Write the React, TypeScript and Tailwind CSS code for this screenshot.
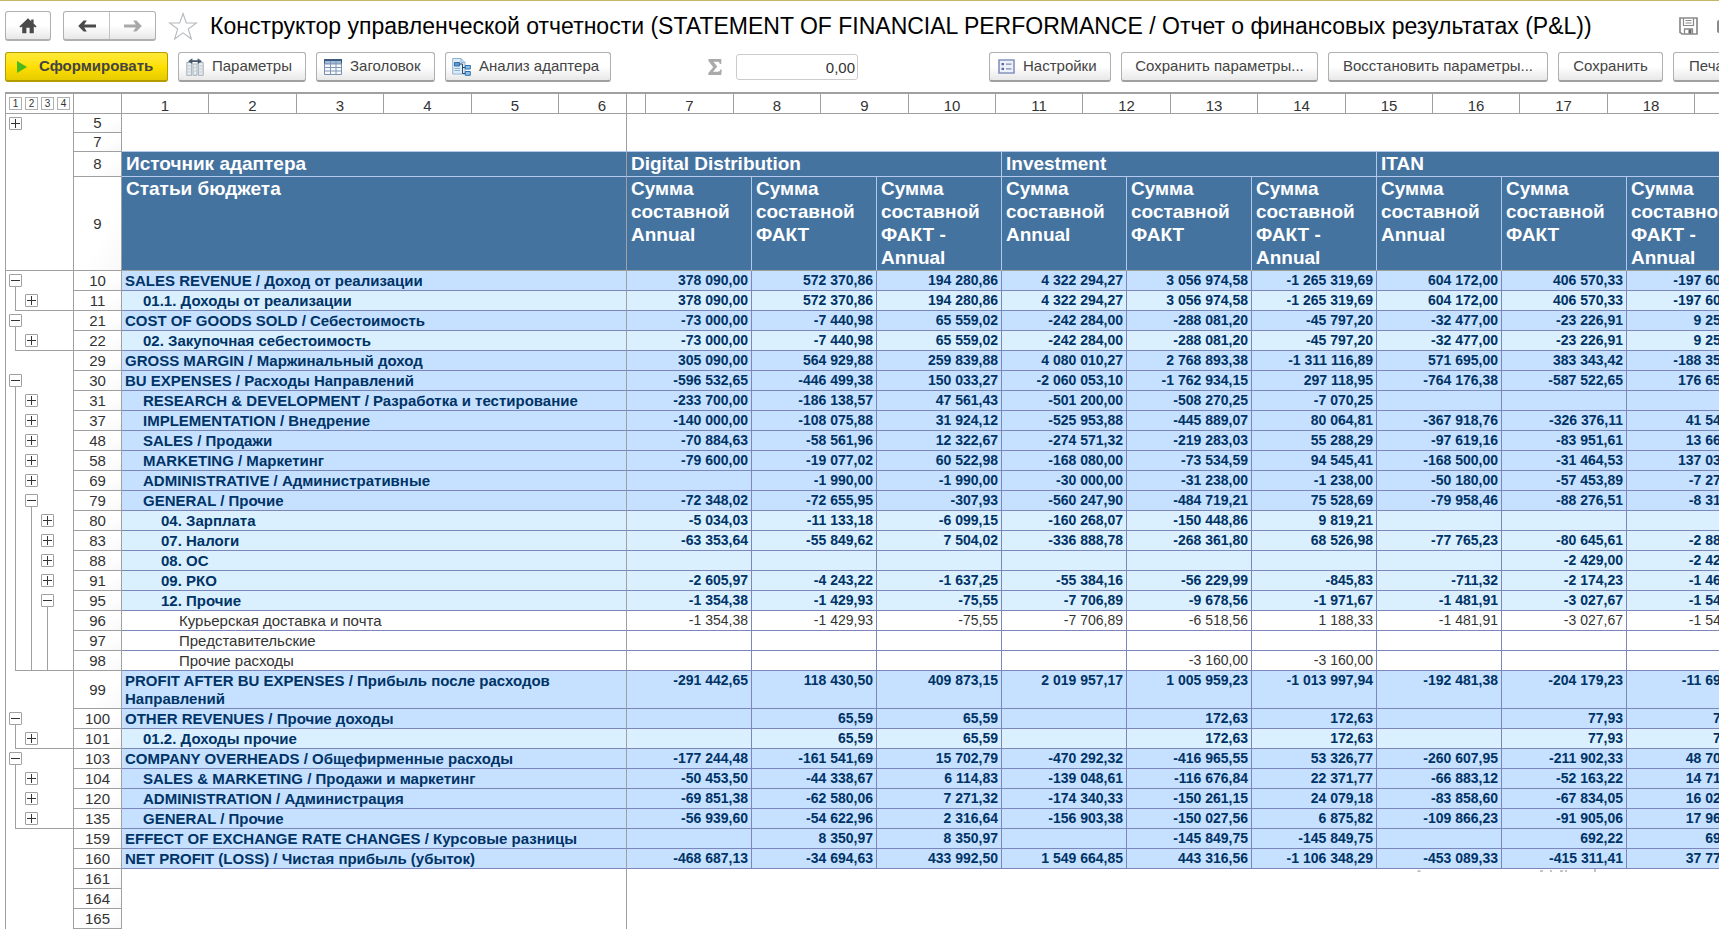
import type { ReactNode } from "react";
import clsx from "clsx";

type Slot = "" | "+" | "-" | "|";
type Tone = "dark" | "light" | "plain";

interface Row {
  num: number;
  label: string;
  level: number;
  tone: Tone;
  tree: Slot[];
  // the group ends here: draw the closing line to the row header
  close?: boolean;
  values: string[];
}

const row = (
  num: number,
  label: string,
  level: number,
  tone: Tone,
  tree: Slot[],
  values: string,
  close = false
): Row => ({ num, label, level, tone, tree, close, values: values.split("|") });

const rows: Row[] = [
  row(10, "SALES REVENUE / Доход от реализации", 0, "dark", ["-"], "378 090,00|572 370,86|194 280,86|4 322 294,27|3 056 974,58|-1 265 319,69|604 172,00|406 570,33|-197 601,67"),
  row(11, "01.1. Доходы от реализации", 1, "light", ["|", "+"], "378 090,00|572 370,86|194 280,86|4 322 294,27|3 056 974,58|-1 265 319,69|604 172,00|406 570,33|-197 601,67", true),
  row(21, "COST OF GOODS SOLD / Себестоимость", 0, "dark", ["-"], "-73 000,00|-7 440,98|65 559,02|-242 284,00|-288 081,20|-45 797,20|-32 477,00|-23 226,91|9 250,09"),
  row(22, "02. Закупочная себестоимость", 1, "light", ["|", "+"], "-73 000,00|-7 440,98|65 559,02|-242 284,00|-288 081,20|-45 797,20|-32 477,00|-23 226,91|9 250,09", true),
  row(29, "GROSS MARGIN / Маржинальный доход", 0, "dark", [], "305 090,00|564 929,88|259 839,88|4 080 010,27|2 768 893,38|-1 311 116,89|571 695,00|383 343,42|-188 351,58"),
  row(30, "BU EXPENSES / Расходы Направлений", 0, "dark", ["-"], "-596 532,65|-446 499,38|150 033,27|-2 060 053,10|-1 762 934,15|297 118,95|-764 176,38|-587 522,65|176 653,73"),
  row(31, "RESEARCH & DEVELOPMENT / Разработка и тестирование", 1, "dark", ["|", "+"], "-233 700,00|-186 138,57|47 561,43|-501 200,00|-508 270,25|-7 070,25|||"),
  row(37, "IMPLEMENTATION / Внедрение", 1, "dark", ["|", "+"], "-140 000,00|-108 075,88|31 924,12|-525 953,88|-445 889,07|80 064,81|-367 918,76|-326 376,11|41 542,65"),
  row(48, "SALES / Продажи", 1, "dark", ["|", "+"], "-70 884,63|-58 561,96|12 322,67|-274 571,32|-219 283,03|55 288,29|-97 619,16|-83 951,61|13 667,55"),
  row(58, "MARKETING / Маркетинг", 1, "dark", ["|", "+"], "-79 600,00|-19 077,02|60 522,98|-168 080,00|-73 534,59|94 545,41|-168 500,00|-31 464,53|137 035,47"),
  row(69, "ADMINISTRATIVE / Административные", 1, "dark", ["|", "+"], "|-1 990,00|-1 990,00|-30 000,00|-31 238,00|-1 238,00|-50 180,00|-57 453,89|-7 273,89"),
  row(79, "GENERAL / Прочие", 1, "dark", ["|", "-"], "-72 348,02|-72 655,95|-307,93|-560 247,90|-484 719,21|75 528,69|-79 958,46|-88 276,51|-8 318,05"),
  row(80, "04. Зарплата", 2, "light", ["|", "|", "+"], "-5 034,03|-11 133,18|-6 099,15|-160 268,07|-150 448,86|9 819,21|||"),
  row(83, "07. Налоги", 2, "light", ["|", "|", "+"], "-63 353,64|-55 849,62|7 504,02|-336 888,78|-268 361,80|68 526,98|-77 765,23|-80 645,61|-2 880,38"),
  row(88, "08. ОС", 2, "light", ["|", "|", "+"], "|||||||-2 429,00|-2 429,00"),
  row(91, "09. РКО", 2, "light", ["|", "|", "+"], "-2 605,97|-4 243,22|-1 637,25|-55 384,16|-56 229,99|-845,83|-711,32|-2 174,23|-1 462,91"),
  row(95, "12. Прочие", 2, "light", ["|", "|", "-"], "-1 354,38|-1 429,93|-75,55|-7 706,89|-9 678,56|-1 971,67|-1 481,91|-3 027,67|-1 545,76"),
  row(96, "Курьерская доставка и почта", 3, "plain", ["|", "|", "|"], "-1 354,38|-1 429,93|-75,55|-7 706,89|-6 518,56|1 188,33|-1 481,91|-3 027,67|-1 545,76"),
  row(97, "Представительские", 3, "plain", ["|", "|", "|"], "||||||||"),
  row(98, "Прочие расходы", 3, "plain", ["|", "|", "|"], "||||-3 160,00|-3 160,00|||", true),
  row(99, "PROFIT AFTER BU EXPENSES / Прибыль после расходов Направлений", 0, "dark", [], "-291 442,65|118 430,50|409 873,15|2 019 957,17|1 005 959,23|-1 013 997,94|-192 481,38|-204 179,23|-11 697,85"),
  row(100, "OTHER REVENUES / Прочие доходы", 0, "dark", ["-"], "|65,59|65,59||172,63|172,63||77,93|77,93"),
  row(101, "01.2. Доходы прочие", 1, "light", ["|", "+"], "|65,59|65,59||172,63|172,63||77,93|77,93", true),
  row(103, "COMPANY OVERHEADS / Общефирменные расходы", 0, "dark", ["-"], "-177 244,48|-161 541,69|15 702,79|-470 292,32|-416 965,55|53 326,77|-260 607,95|-211 902,33|48 705,62"),
  row(104, "SALES & MARKETING / Продажи и маркетинг", 1, "dark", ["|", "+"], "-50 453,50|-44 338,67|6 114,83|-139 048,61|-116 676,84|22 371,77|-66 883,12|-52 163,22|14 719,90"),
  row(120, "ADMINISTRATION / Администрация", 1, "dark", ["|", "+"], "-69 851,38|-62 580,06|7 271,32|-174 340,33|-150 261,15|24 079,18|-83 858,60|-67 834,05|16 024,55"),
  row(135, "GENERAL / Прочие", 1, "dark", ["|", "+"], "-56 939,60|-54 622,96|2 316,64|-156 903,38|-150 027,56|6 875,82|-109 866,23|-91 905,06|17 961,17", true),
  row(159, "EFFECT OF EXCHANGE RATE CHANGES / Курсовые разницы", 0, "dark", [], "|8 350,97|8 350,97||-145 849,75|-145 849,75||692,22|692,22"),
  row(160, "NET PROFIT (LOSS) / Чистая прибыль (убыток)", 0, "dark", [], "-468 687,13|-34 694,63|433 992,50|1 549 664,85|443 316,56|-1 106 348,29|-453 089,33|-415 311,41|37 777,92"),
];

const groups = ["Digital Distribution", "Investment", "ITAN"];
const measures = ["Сумма составной Annual", "Сумма составной ФАКТ", "Сумма составной ФАКТ - Annual"];
const rulerColumns = Array.from({ length: 19 }, (_, i) => i + 1);

const toneClass: Record<Tone, string> = {
  dark: "bg-[#c6e1ff] font-bold text-[#003366]",
  light: "bg-[#daf0ff] font-bold text-[#003366]",
  plain: "bg-white text-[#333333]",
};

const indentClass = ["pl-[3px]", "pl-[21px]", "pl-[39px]", "pl-[57px]"];

const ToolButton = ({ icon, className, children }: { icon?: ReactNode; className?: string; children: ReactNode }) => (
  <button
    type="button"
    className={clsx(
      "flex h-[30px] shrink-0 items-center gap-2 whitespace-nowrap rounded-[3px] border border-[#b0b0b0] border-b-2 border-b-[#a0a0a0] bg-linear-to-b from-white from-50% to-[#e8e8e8] text-[15px] text-[#444444]",
      className
    )}
  >
    {icon}
    {children}
  </button>
);

const HomeIcon = () => (
  <svg width="18" height="16" viewBox="0 0 18 16" fill="#4a4a4a" aria-hidden="true">
    <path d="M9 0.3 0.4 8.4 1.6 9.6 3.2 8.4V15.3H7.4V9.8H10.6V15.3H14.8V8.4L16.4 9.6 17.6 8.4 14.6 5.5V1.6H12.2V3.3Z" />
  </svg>
);

const ArrowIcon = ({ flip }: { flip?: boolean }) => (
  <svg width="18" height="12" viewBox="0 0 18 12" className={flip ? "rotate-180" : ""} aria-hidden="true">
    <path
      d="M5.6 0.5H8.8L6.2 4.5H18V7.5H6.2L8.8 11.5H5.6L0.2 6Z"
      fill={flip ? "#a8a8a8" : "#4a4a4a"}
    />
  </svg>
);

const StarIcon = () => (
  <svg width="30" height="29" viewBox="0 0 30 29" fill="white" stroke="#b4bac0" strokeWidth="1.1" aria-hidden="true">
    <path d="M15 1.5 18.3 11H28.5L20.3 17 23.4 27 15 20.9 6.6 27 9.7 17 1.5 11H11.7Z" />
  </svg>
);

const FloppyIcon = () => (
  <svg width="19" height="18" viewBox="0 0 19 18" fill="none" stroke="#8a8a8a" aria-hidden="true">
    <path d="M1 1H18V17H3L1 15.3Z" strokeWidth="1.7" />
    <path d="M4.5 1V8.5H14.5V1M6.5 3.5H12.5M6.5 6H12.5" strokeWidth="1.2" />
    <path d="M5.5 17V12H13.5V17" strokeWidth="1.3" />
    <path d="M9.5 12.5H12.5V16.5H9.5Z" fill="#666" stroke="none" />
  </svg>
);

const ParamsIcon = () => (
  <svg width="18" height="18" viewBox="0 0 18 18" fill="none" aria-hidden="true">
    <path d="M0.8 4.5H5.6V17.3H0.8ZM7 6H11V17.3H7ZM12.4 4.5H17.2V17.3H12.4Z" fill="#e8edf1" stroke="#a3b0ba" />
    <path d="M1 8H5.5M1 11H5.5M1 14H5.5M12.5 8H17M12.5 11H17M12.5 14H17M7 9.5H11M7 13H11" stroke="#c3ccd3" />
    <path d="M2 3.2 6.4 0.3V2.3H11.6V0.3L16 3.2 11.6 6.1V4.1H6.4V6.1Z" fill="#46586a" />
  </svg>
);

const TableIcon = () => (
  <svg width="18" height="16" viewBox="0 0 18 16" aria-hidden="true">
    <path d="M0.5 0.5H17.5V15.5H0.5Z" fill="#f6fafd" stroke="#7a8fae" />
    <path d="M0 0H18V4.5H0Z" fill="#3d5a80" />
    <path d="M1 2H17V4.5H1Z" fill="#9dbbd8" />
    <path d="M1 5H17M1 8.5H17M1 12H17M6.5 2V15M12 2V15" stroke="#7f95b3" />
  </svg>
);

const AnalysisIcon = () => (
  <svg width="19" height="18" viewBox="0 0 19 18" fill="none" aria-hidden="true">
    <path d="M0.7 0.5H9L13 4.5V16H0.7Z" fill="#dcebf8" stroke="#8fb2d4" />
    <path d="M9 0.5V4.5H13" stroke="#8fb2d4" />
    <path d="M2.5 4.5H7.5V8H2.5Z" fill="#5b9bd0" stroke="#2f6ea8" />
    <path d="M2.5 10.5H8M2.5 12.5H8" stroke="#8fb2d4" />
    <path d="M7.5 6H10.5V15.5H13M10.5 9.5H13" stroke="#2c4a68" />
    <path d="M13.3 7.5H18.3V11H13.3ZM13.3 13.5H18.3V17.3H13.3Z" fill="#8fc0e6" stroke="#2f6ea8" />
  </svg>
);

const SettingsIcon = () => (
  <svg width="17" height="15" viewBox="0 0 17 15" fill="none" aria-hidden="true">
    <path d="M1 1H16V14H1Z" fill="#eef1fa" stroke="#8592bd" strokeWidth="1.6" />
    <path d="M3.5 4H6V6.3H3.5ZM3.5 8.7H6V11H3.5Z" fill="#5b6ba3" />
    <path d="M8 5.2H13.5M8 9.9H13.5" stroke="#7f8cb5" strokeWidth="1.2" />
  </svg>
);

const SigmaIcon = () => (
  <svg width="14" height="16" viewBox="0 0 14 16" fill="#aaaaaa" role="img" aria-label="Сумма">
    <path d="M0.5 0H13.3V5H11.8C11.6 3.3 11 2.7 9.2 2.7H5.4L9.3 7.6 5 12.8H9.6C11.4 12.8 12 12.1 12.3 10.6H13.8L13.2 16H0.3V14L5.2 8.2 0.5 2Z" />
  </svg>
);

const Toggle = ({ open }: { open: boolean }) => (
  <button
    type="button"
    aria-label={open ? "Свернуть группу" : "Развернуть группу"}
    className="block size-[13px] shrink-0 rounded-[1px] border border-[#a0a0a0] bg-white"
  >
    <svg width="11" height="11" viewBox="0 0 11 11" stroke="#333333" aria-hidden="true">
      <path d={open ? "M1 5.5H10" : "M1 5.5H10M5.5 1V10"} />
    </svg>
  </button>
);

const TreeCell = ({ tree, close, className }: { tree: Slot[]; close?: boolean; className?: string }) => (
  <td className={clsx("h-px border-l border-r border-[#a0a0a0] p-0", className)}>
    <div className="flex h-full pl-[2px]">
      {tree.map((slot, i) => (
        <div key={i} className={clsx("flex h-full w-4 shrink-0 flex-col", close && i > 0 && "border-b border-[#a0a0a0]")}>
          {slot === "|" && (
            <div className={clsx("ml-[7px] flex-1 border-l border-[#a0a0a0]", close && i === 0 && "border-b")} />
          )}
          {(slot === "+" || slot === "-") && (
            <div className="flex flex-1 flex-col pl-px pt-[3px]">
              <Toggle open={slot === "-"} />
              {slot === "-" && <div className="ml-[6px] flex-1 border-l border-[#a0a0a0]" />}
            </div>
          )}
        </div>
      ))}
      {close && <div className="flex-1 border-b border-[#a0a0a0]" />}
    </div>
  </td>
);

const RowNumber = ({ children }: { children: ReactNode }) => (
  <th
    scope="row"
    className="border-b border-r border-[#a0a0a0] bg-linear-to-br from-white from-60% to-[#f8f8f8] p-0 text-center align-middle text-[15px] font-normal leading-[18px] text-[#333333]"
  >
    {children}
  </th>
);

const Header = () => (
  <header className="flex items-center border-t border-[#c9b565] pl-[5px] pt-[10px]">
    <button
      type="button"
      aria-label="Начальная страница"
      className="flex h-[30px] w-[46px] shrink-0 items-center justify-center rounded-[3px] border border-b-2 border-[#b0b0b0] bg-linear-to-b from-white from-50% to-[#e8e8e8]"
    >
      <HomeIcon />
    </button>
    <div className="ml-3 flex h-[30px] w-[93px] shrink-0 rounded-[3px] border border-b-2 border-[#b0b0b0] bg-linear-to-b from-white from-50% to-[#e8e8e8]">
      <button type="button" aria-label="Назад" className="flex flex-1 items-center justify-center border-r border-[#c4c4c4]">
        <ArrowIcon />
      </button>
      <button type="button" aria-label="Вперед" className="flex flex-1 items-center justify-center">
        <ArrowIcon flip />
      </button>
    </div>
    <button type="button" aria-label="В избранное" className="ml-3 shrink-0">
      <StarIcon />
    </button>
    <h1 className="ml-3 whitespace-nowrap text-[23px] leading-[30px] text-black">
      Конструктор управленческой отчетности (STATEMENT OF FINANCIAL PERFORMANCE / Отчет о финансовых результатах (P&amp;L))
    </h1>
    <div className="ml-auto flex shrink-0 items-center gap-[19px]">
      <button type="button" aria-label="Сохранить файл">
        <FloppyIcon />
      </button>
      <div className="h-[13px] w-[2px] rounded-l-sm border-y border-l-2 border-[#8a8a8a]" />
    </div>
  </header>
);

const Toolbar = () => (
  <div className="flex items-center gap-[10px] overflow-hidden pb-[10px] pl-[5px] pt-[11px]">
    <button
      type="button"
      className="flex h-[30px] w-[163px] shrink-0 items-center gap-3 rounded-[3px] border border-b-2 border-[#b39b00] bg-linear-to-b from-[#ffe935] via-[#ffe000] to-[#e6cb00] pl-[11px] text-[15px] font-bold text-[#444444]"
    >
      <svg width="10" height="12" viewBox="0 0 10 12" fill="#4cb81c" aria-hidden="true">
        <path d="M0 0 10 6 0 12Z" />
      </svg>
      Сформировать
    </button>
    <ToolButton icon={<ParamsIcon />} className="w-[128px] pl-[7px]">Параметры</ToolButton>
    <ToolButton icon={<TableIcon />} className="w-[119px] pl-[7px]">Заголовок</ToolButton>
    <ToolButton icon={<AnalysisIcon />} className="w-[166px] pl-[6px]">Анализ адаптера</ToolButton>
    <label htmlFor="cell-sum" className="ml-[87px] shrink-0">
      <SigmaIcon />
    </label>
    <input
      id="cell-sum"
      type="text"
      readOnly
      value="0,00"
      className="ml-1 h-[26px] w-[122px] shrink-0 rounded-[3px] border border-[#cccccc] bg-white pr-[2px] text-right text-[15px] text-[#333333]"
    />
    <ToolButton icon={<SettingsIcon />} className="ml-[121px] w-[122px] pl-2">Настройки</ToolButton>
    <ToolButton className="w-[197px] justify-center">Сохранить параметры...</ToolButton>
    <ToolButton className="w-[220px] justify-center">Восстановить параметры...</ToolButton>
    <ToolButton className="w-[105px] justify-center">Сохранить</ToolButton>
    <ToolButton className="px-[15px]">Печать</ToolButton>
  </div>
);

const Ruler = () => (
  <div className="relative flex h-[22px] border-b border-l border-t-2 border-[#a0a0a0]">
    <div className="flex w-[68px] shrink-0 items-center gap-[3px] border-r border-[#a0a0a0] pl-[3px]">
      {[1, 2, 3, 4].map((n) => (
        <button
          key={n}
          type="button"
          className="h-[13px] w-[13px] border border-[#b0b0b0] text-center text-[10px] leading-[11px] text-[#333333]"
        >
          {n}
        </button>
      ))}
    </div>
    <div className="w-12 shrink-0 border-r border-[#a0a0a0]" />
    <div className="flex min-w-0 flex-1 overflow-hidden">
      {rulerColumns.map((n) => (
        <div
          key={n}
          className={clsx(
            "shrink-0 border-r border-[#a0a0a0] pt-px text-center text-[15px] leading-[22px] text-[#333333]",
            n % 5 === 2 || n % 5 === 4 ? "w-[88px]" : "w-[87px]"
          )}
        >
          {n}
        </div>
      ))}
    </div>
    {/* frozen pane edge */}
    <div className="absolute inset-y-0 left-[620px] border-r border-[#a0a0a0]" />
  </div>
);

const headCell = "border-r border-[#b4c8ee] py-0 pl-1 pr-0 text-left align-top text-[19px] font-bold text-white";

const Sheet = () => (
  <table className="w-[1747px] table-fixed border-separate border-spacing-0">
    <colgroup>
      <col className="w-[69px]" />
      <col className="w-12" />
      <col className="w-[505px]" />
      {rows[0].values.map((_, i) => (
        <col key={i} className="w-[125px]" />
      ))}
    </colgroup>
    <thead>
      <tr className="h-[19px]">
        <TreeCell tree={["+"]} />
        <RowNumber>5</RowNumber>
        <td className="border-r border-[#a0a0a0]" />
        <td colSpan={9} />
      </tr>
      <tr className="h-[19px]">
        <TreeCell tree={[]} />
        <RowNumber>7</RowNumber>
        <td className="border-b border-r border-[#a0a0a0] border-b-[#b4c8ee]" />
        <td colSpan={9} className="border-b border-[#b4c8ee]" />
      </tr>
      <tr className="h-[25px] bg-[#4573a0]">
        <TreeCell tree={[]} className="bg-white" />
        <RowNumber>8</RowNumber>
        <th scope="col" className={clsx(headCell, "border-b border-r-[#a0a0a0] leading-6")}>Источник адаптера</th>
        {groups.map((g) => (
          <th key={g} scope="colgroup" colSpan={3} className={clsx(headCell, "border-b leading-6")}>{g}</th>
        ))}
      </tr>
      <tr className="h-[94px] bg-[#4573a0]">
        <TreeCell tree={[]} className="border-b bg-white" />
        <RowNumber>9</RowNumber>
        <th scope="col" className={clsx(headCell, "border-b border-b-[#a0a0a0] border-r-[#a0a0a0] leading-[23px]")}>Статьи бюджета</th>
        {groups.flatMap((g) =>
          measures.map((m) => (
            <th key={g + m} scope="col" className={clsx(headCell, "border-b border-b-[#a0a0a0] leading-[23px]")}>
              {m}
            </th>
          ))
        )}
      </tr>
    </thead>
    <tbody>
      {rows.map((r) => (
        <tr key={r.num} className="h-5">
          <TreeCell tree={r.tree} close={r.close} />
          <RowNumber>{r.num}</RowNumber>
          <td
            className={clsx(
              "border-b border-r border-[#7d86ba] border-r-[#a0a0a0] py-0 pr-8 align-top text-[15px]",
              r.num === 99 ? "pt-px leading-[18px]" : "leading-[19px]",
              indentClass[r.level],
              toneClass[r.tone]
            )}
          >
            {r.label}
          </td>
          {r.values.map((v, i) => (
            <td
              key={i}
              className={clsx(
                "whitespace-nowrap border-b border-r border-[#7d86ba] py-0 pl-0 pr-[3px] text-right align-top text-[14px] leading-[19px]",
                toneClass[r.tone]
              )}
            >
              {v}
            </td>
          ))}
        </tr>
      ))}
      {[161, 164, 165].map((n) => (
        <tr key={n} className="h-5">
          <TreeCell tree={[]} />
          <RowNumber>{n}</RowNumber>
          <td className="border-r border-[#a0a0a0]" />
          <td colSpan={9} className="p-0 align-top">
            {n === 161 && (
              <svg width="184" height="3" viewBox="0 0 184 3" className="ml-[789px] block" fill="#c4c4c4" aria-hidden="true">
                <path d="M2 1H4L5 3H1ZM124 1H127V3H124ZM134 1H136V3H134ZM144 1H147V3H144ZM149 1H151V3H149ZM178 0H180V3H178Z" />
              </svg>
            )}
          </td>
        </tr>
      ))}
    </tbody>
  </table>
);

export default function App() {
  return (
    <div className="min-h-screen overflow-hidden bg-white font-['Liberation_Sans',Arial,sans-serif]">
      <Header />
      <Toolbar />
      <main className="ml-[5px] overflow-hidden">
        <Ruler />
        <Sheet />
      </main>
    </div>
  );
}
